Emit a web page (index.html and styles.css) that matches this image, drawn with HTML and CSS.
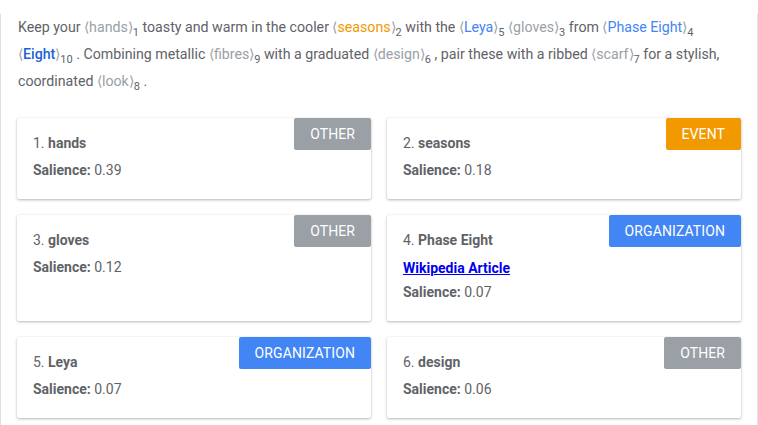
FILE: index.html
```html
<!DOCTYPE html>
<html>
<head>
<meta charset="utf-8">
<link rel="stylesheet" href="styles.css">
</head>
<body>
<div class="page">
  <p class="text">Keep your <span class="mention"><span class="ent other"><span class="br">⟨</span>hands<span class="br">⟩</span></span><sub>1</sub></span> toasty and warm in the cooler <span class="mention"><span class="ent event"><span class="br">⟨</span>seasons<span class="br">⟩</span></span><sub>2</sub></span> with the <span class="mention"><span class="ent org"><span class="br">⟨</span>Leya<span class="br">⟩</span></span><sub>5</sub></span> <span class="mention"><span class="ent other"><span class="br">⟨</span>gloves<span class="br">⟩</span></span><sub>3</sub></span> from <span class="mention"><span class="ent org"><span class="br">⟨</span>Phase Eight<span class="br">⟩</span></span><sub>4</sub></span> <span class="mention"><span class="ent org strong"><span class="br">⟨</span>Eight<span class="br">⟩</span></span><sub>10</sub></span> . Combining metallic <span class="mention"><span class="ent other"><span class="br">⟨</span>fibres<span class="br">⟩</span></span><sub>9</sub></span> with a graduated <span class="mention"><span class="ent other"><span class="br">⟨</span>design<span class="br">⟩</span></span><sub>6</sub></span> , pair these with a ribbed <span class="mention"><span class="ent other"><span class="br">⟨</span>scarf<span class="br">⟩</span></span><sub>7</sub></span> for a stylish, coordinated <span class="mention"><span class="ent other"><span class="br">⟨</span>look<span class="br">⟩</span></span><sub>8</sub></span> .</p>

  <div class="grid">
    <div class="card">
      <span class="badge b-other">OTHER</span>
      <div class="title">1. <b>hands</b></div>
      <div class="sal"><b>Salience:</b> 0.39</div>
    </div>
    <div class="card">
      <span class="badge b-event">EVENT</span>
      <div class="title">2. <b>seasons</b></div>
      <div class="sal"><b>Salience:</b> 0.18</div>
    </div>
    <div class="card">
      <span class="badge b-other">OTHER</span>
      <div class="title">3. <b>gloves</b></div>
      <div class="sal"><b>Salience:</b> 0.12</div>
    </div>
    <div class="card">
      <span class="badge b-org">ORGANIZATION</span>
      <div class="title">4. <b>Phase Eight</b></div>
      <a class="wiki" href="#">Wikipedia Article</a>
      <div class="sal after-link"><b>Salience:</b> 0.07</div>
    </div>
    <div class="card">
      <span class="badge b-org">ORGANIZATION</span>
      <div class="title">5. <b>Leya</b></div>
      <div class="sal"><b>Salience:</b> 0.07</div>
    </div>
    <div class="card">
      <span class="badge b-other">OTHER</span>
      <div class="title">6. <b>design</b></div>
      <div class="sal"><b>Salience:</b> 0.06</div>
    </div>
  </div>
</div>
</body>
</html>
```

FILE: styles.css
```css
html, body {
  margin: 0;
  padding: 0;
  background: #ffffff;
}

body {
  font-family: Roboto, "Liberation Sans", Arial, sans-serif;
  font-size: 14px;
  color: #5f6368;
}

.page {
  box-sizing: border-box;
  width: 758px;
  min-height: 425px;
  border-left: 1px solid #e0e0e0;
  border-right: 1px solid #e0e0e0;
  padding: 0 16px;
}

.text {
  margin: 14px 0 23px 1px;
  line-height: 27px;
  font-size: 14.2px;
}

.mention {
  white-space: nowrap;
}

.text sub {
  font-size: 11px;
  line-height: 0;
  vertical-align: -4px;
  color: #5f6368;
}

.ent .br {
  color: #9aa0a6;
}

.ent.other {
  color: #9aa0a6;
}

.ent.event {
  color: #f29900;
}

.ent.org {
  color: #4285f4;
}

.ent.strong {
  color: #1a62d6;
  font-weight: 500;
}

.ent.strong .br {
  font-weight: 400;
}

.grid {
  display: grid;
  grid-template-columns: 1fr 1fr;
  column-gap: 16px;
  row-gap: 16px;
}

.card {
  position: relative;
  background: #fff;
  border-radius: 2px;
  box-shadow: 0 1px 3px rgba(0, 0, 0, 0.28), 0 0 1px rgba(0, 0, 0, 0.08);
  padding: 14px 16px 18px;
  display: flex;
  flex-direction: column;
  align-items: flex-start;
}

.badge {
  position: absolute;
  top: 0;
  right: 0;
  height: 32px;
  line-height: 32px;
  padding: 0 16px;
  color: #fff;
  font-size: 14px;
  border-radius: 2px;
  letter-spacing: 0.1px;
}

.b-other { background: #9aa0a6; }
.b-event { background: #f29900; }
.b-org { background: #4285f4; }

.title {
  line-height: 22px;
}

.title b,
.sal b {
  font-weight: 700;
}

.sal {
  margin-top: 5px;
  line-height: 22px;
}

.sal.after-link {
  margin-top: 2px;
}

.wiki {
  margin-top: 6px;
  line-height: 22px;
  color: #0000ee;
  font-weight: 700;
  text-decoration: underline;
}
```
